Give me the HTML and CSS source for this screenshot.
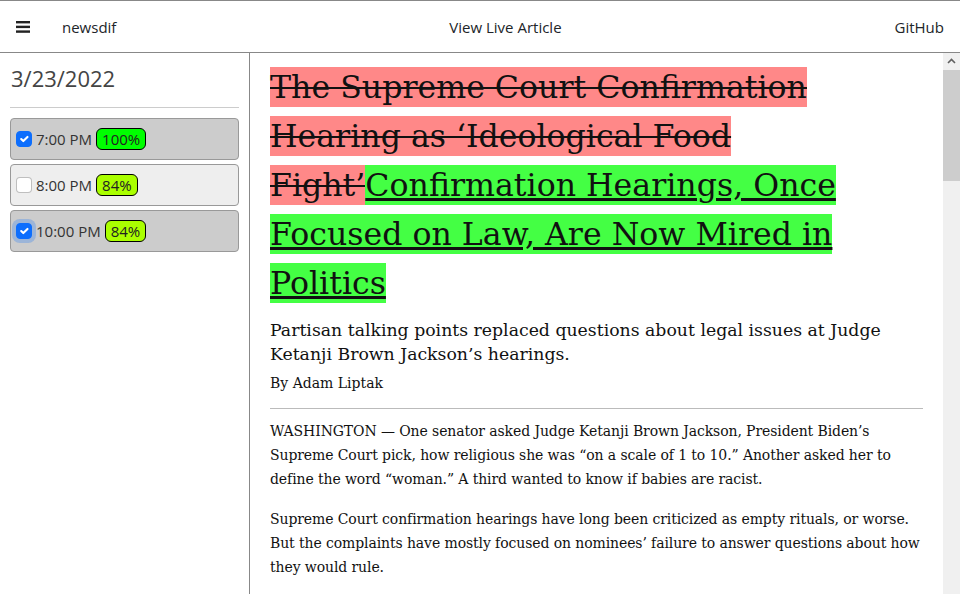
FILE: index.html
```html
<!DOCTYPE html>
<html lang="en">
<head>
<meta charset="utf-8">
<title>newsdif</title>
<link rel="stylesheet" href="styles.css">
</head>
<body>
<header class="topbar">
  <div class="brand">
    <button class="menu-btn" aria-label="Menu">
      <svg width="14" height="12" viewBox="0 0 14 12"><rect x="0" y="0" width="14" height="2.4" fill="#222"/><rect x="0" y="4.7" width="14" height="2.4" fill="#222"/><rect x="0" y="9.4" width="14" height="2.4" fill="#222"/></svg>
    </button>
    <span class="brand-name">newsdif</span>
  </div>
  <a class="nav-link" href="#">View Live Article</a>
  <a class="nav-link" href="#">GitHub</a>
</header>
<div class="layout">
  <aside class="sidebar">
    <h2 class="date">3/23/2022</h2>
    <hr class="rule">
    <ul class="versions">
      <li class="version selected"><input class="check" type="checkbox" checked><span class="time">7:00 PM</span><span class="badge full">100%</span></li>
      <li class="version"><input class="check" type="checkbox"><span class="time">8:00 PM</span><span class="badge partial">84%</span></li>
      <li class="version selected"><input class="check focused" type="checkbox" checked><span class="time">10:00 PM</span><span class="badge partial">84%</span></li>
    </ul>
  </aside>
  <main class="pane">
    <div class="scroller">
      <article class="article">
        <h1 class="headline"><del class="removed">The Supreme Court Confirmation Hearing as ‘Ideological Food Fight’</del><ins class="added">Confirmation Hearings, Once Focused on Law, Are Now Mired in Politics</ins></h1>
        <p class="summary">Partisan talking points replaced questions about legal issues at Judge Ketanji Brown Jackson’s hearings.</p>
        <p class="byline">By Adam Liptak</p>
        <hr class="article-rule">
        <p class="para">WASHINGTON — One senator asked Judge Ketanji Brown Jackson, President Biden’s Supreme Court pick, how religious she was “on a scale of 1 to 10.” Another asked her to define the word “woman.” A third wanted to know if babies are racist.</p>
        <p class="para">Supreme Court confirmation hearings have long been criticized as empty rituals, or worse. But the complaints have mostly focused on nominees’ failure to answer questions about how they would rule.</p>
        <p class="para">This week’s hearings were different. Senators spent much of their time on grievances, talking points and attempts to generate viral moments rather than on questions about legal doctrine.</p>
        <p class="para">The shift reflects broader changes in the Senate and in the nation’s politics, scholars said, as the confirmation process has become another front in a polarized battle.</p>
        <p class="para">Judge Jackson, who would be the first Black woman to serve on the Supreme Court, answered most questions patiently, often repeating her account of her methodology for deciding cases.</p>
        <p class="para">She is expected to be confirmed before the court’s term ends this summer.</p>
      </article>
    </div>
    <div class="fake-scrollbar" aria-hidden="true">
      <div class="sb-button">
        <svg width="17" height="17" viewBox="0 0 17 17"><path d="M5 10 8.5 6.5 12 10" fill="none" stroke="#606060" stroke-width="1.6"/></svg>
      </div>
      <div class="sb-thumb"></div>
    </div>
  </main>
</div>
</body>
</html>
```
FILE: styles.css
```css
* { box-sizing: border-box; }
html, body { margin: 0; padding: 0; height: 100%; }
body {
  font-family: "Open Sans", "Noto Sans", sans-serif;
  color: #212529;
  background: #fff;
  display: flex;
  flex-direction: column;
  overflow: hidden;
}
.topbar {
  flex: 0 0 53px;
  display: flex;
  align-items: center;
  justify-content: space-between;
  padding: 1px 16px 0;
  border-top: 1px solid #888;
  border-bottom: 1px solid #888;
  font-size: 15px;
}
.brand { display: flex; align-items: center; gap: 32px; }
.menu-btn {
  border: 0; background: none; padding: 0; margin: -1px 0 0;
  display: flex; width: 14px; height: 12px; cursor: pointer;
}
.brand-name, .nav-link { color: #212529; text-decoration: none; }
.layout { flex: 1; display: flex; min-height: 0; }
.sidebar {
  flex: 0 0 250px;
  border-right: 1px solid #888;
  padding: 10px 10px;
}
.date {
  margin: 0;
  font-weight: 400;
  font-size: 22px;
  line-height: 30px;
  color: #444;
  padding-left: 1px;
}
.rule {
  border: 0;
  border-top: 1px solid #ccc;
  margin: 14px 0 10px;
}
.versions { list-style: none; margin: 0; padding: 0; display: flex; flex-direction: column; gap: 4px; }
.version {
  display: flex;
  align-items: center;
  height: 42px;
  padding: 0 5px;
  border: 1px solid #999;
  border-radius: 4px;
  background: #eee;
  font-size: 15px;
  color: #333;
}
.version.selected { background: #ccc; }
.check {
  appearance: none;
  -webkit-appearance: none;
  width: 16px; height: 16px;
  margin: 0 4px 0 0;
  border: 1px solid rgba(0,0,0,.25);
  border-radius: 4px;
  background: #fff;
  flex: 0 0 auto;
}
.check:checked {
  background-color: #0d6efd;
  border-color: #0d6efd;
  background-image: url("data:image/svg+xml,%3csvg xmlns='http://www.w3.org/2000/svg' viewBox='0 0 20 20'%3e%3cpath fill='none' stroke='%23fff' stroke-linecap='round' stroke-linejoin='round' stroke-width='3' d='m6 10 3 3 6-6'/%3e%3c/svg%3e");
  background-size: 100% 100%;
}
.check.focused { box-shadow: 0 0 0 4px rgba(13,110,253,.25); }
.time { margin-right: 4px; }
.badge {
  border: 1px solid #000;
  border-radius: 6px;
  padding: 0 5px;
  line-height: 20px;
  color: #222;
}
.badge.full { background: #00ff00; }
.badge.partial { background: #aaff00; }
.pane {
  flex: 1;
  display: flex;
  min-width: 0;
}
.scroller {
  flex: 1;
  min-width: 0;
  overflow-y: auto;
  scrollbar-width: none;
  padding: 10px 20px 20px 20px;
}
.fake-scrollbar {
  flex: 0 0 17px;
  background: #f0f0f0;
  display: flex;
  flex-direction: column;
}
.sb-button { height: 17px; display: flex; }
.sb-thumb { height: 111px; background: #cdcdcd; }
.article { font-family: "DejaVu Serif", Georgia, serif; color: #111; }
.headline {
  margin: 0;
  font-weight: 400;
  font-size: 31.6px;
  line-height: 49px;
}
.removed { background: #ff8888; text-decoration: line-through; text-decoration-thickness: 2px; padding: 2px 0; }
.added { background: #44ff44; text-decoration: underline; text-decoration-thickness: 3px; padding: 2px 0; }
.summary { margin: 10px 0 0; font-size: 17.3px; line-height: 24px; }
.byline { margin: 5px 0 0; font-size: 14px; line-height: 24px; }
.article-rule { border: 0; border-top: 1px solid #bbb; margin: 13px 0 10px; }
.para { margin: 0 0 16px; font-size: 14px; line-height: 24px; letter-spacing: -0.1px; }
```
